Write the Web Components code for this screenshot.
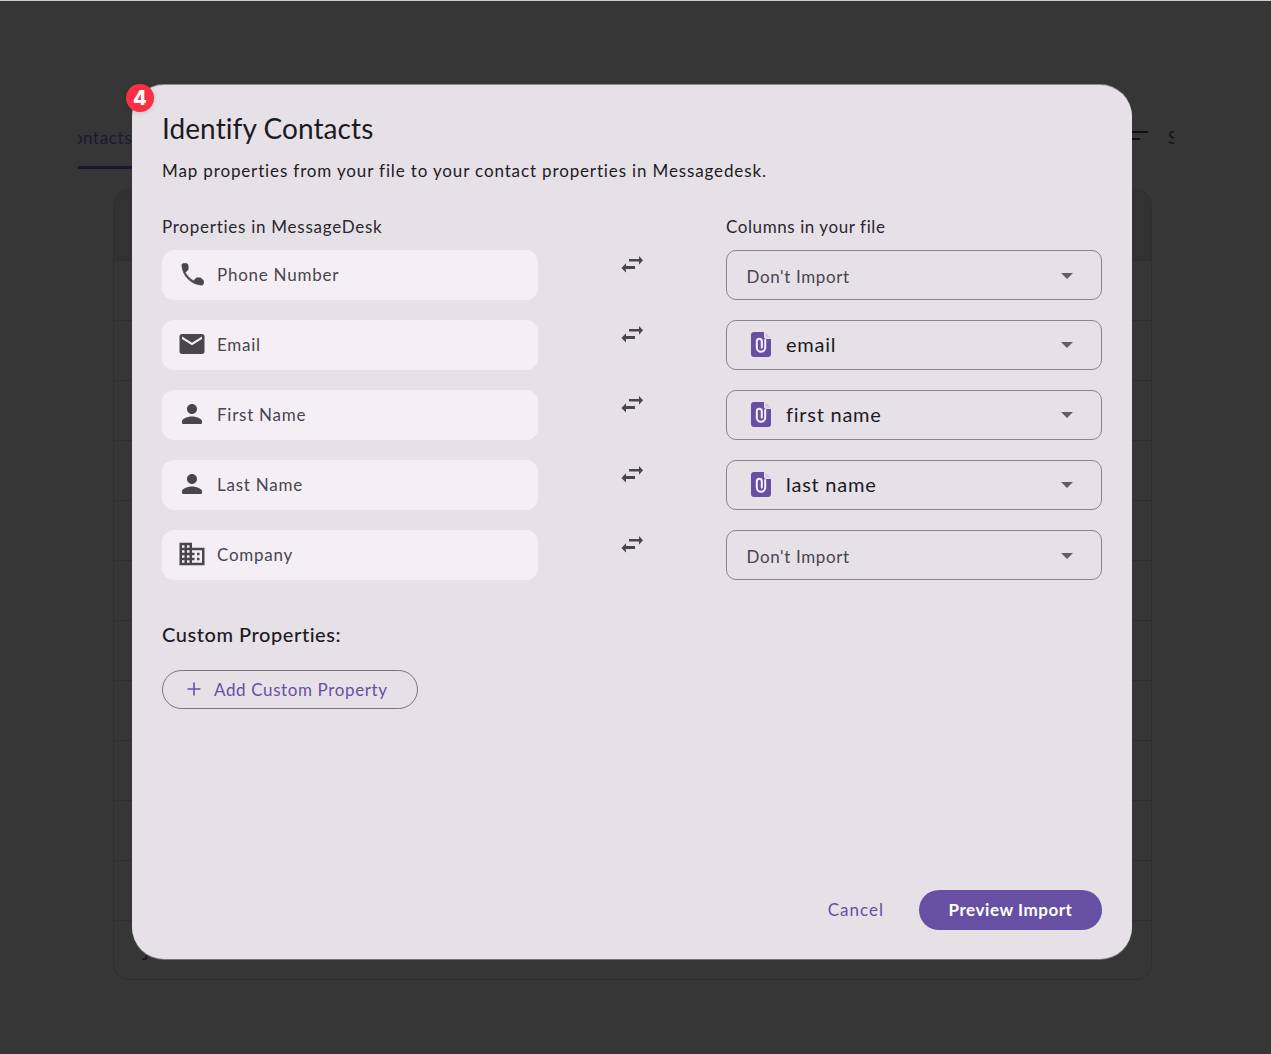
<!DOCTYPE html>
<html><head><meta charset="utf-8">
<style>
html,body{margin:0;padding:0;background:#363636}
body{font-family:"Lato","Open Sans",sans-serif;width:1271px;height:1054px;overflow:hidden;position:relative}
</style></head><body>
<ui-page></ui-page>
<ui-dialog heading="Identify Contacts" description="Map properties from your file to your contact properties in Messagedesk." badge="4">
  <map-row icon="phone" label="Phone Number"></map-row>
  <map-row icon="mail" label="Email" file="email"></map-row>
  <map-row icon="person" label="First Name" file="first name"></map-row>
  <map-row icon="person" label="Last Name" file="last name"></map-row>
  <map-row icon="business" label="Company"></map-row>
</ui-dialog>
<script>
const ICONS={
 phone:'<path stroke="#49454f" stroke-width=".5" d="M19.23 15.26l-2.54-.29c-.61-.07-1.21.14-1.64.57l-1.84 1.84c-2.83-1.44-5.15-3.75-6.59-6.59l1.85-1.85c.43-.43.64-1.03.57-1.64l-.29-2.52c-.08-.68-.65-1.19-1.34-1.19H5.32c-.82 0-1.5.68-1.45 1.5.53 8.5 7.33 15.29 15.82 15.82.82.05 1.5-.63 1.5-1.45v-1.73c.01-.68-.5-1.25-1.18-1.33z"/>',
 mail:'<path d="M20 4H4c-1.1 0-1.99.9-1.99 2L2 18c0 1.1.9 2 2 2h16c1.1 0 2-.9 2-2V6c0-1.1-.9-2-2-2zm0 4l-8 5-8-5V6l8 5 8-5v2z"/>',
 person:'<path d="M12 12c2.21 0 4-1.79 4-4s-1.79-4-4-4-4 1.79-4 4 1.79 4 4 4zm0 2c-2.67 0-8 1.34-8 4v1c0 .55.45 1 1 1h14c.55 0 1-.45 1-1v-1c0-2.66-5.33-4-8-4z"/>',
 business:'<path d="M12 7V3H2v18h20V7H12zM6 19H4v-2h2v2zm0-4H4v-2h2v2zm0-4H4V9h2v2zm0-4H4V5h2v2zm4 12H8v-2h2v2zm0-4H8v-2h2v2zm0-4H8V9h2v2zm0-4H8V5h2v2zm10 12h-8v-2h2v-2h-2v-2h2v-2h-2V9h8v10zm-2-8h-2v2h2v-2zm0 4h-2v2h2v-2z"/>'
};
function def(name,html,cls){
  const t=document.createElement('template');t.innerHTML=html;
  customElements.define(name,class extends HTMLElement{
    constructor(){super();this.attachShadow({mode:'open'}).appendChild(t.content.cloneNode(true));}
    connectedCallback(){cls&&cls.call(this,this.shadowRoot);}
  });
}
def('ui-page',`<style>
:host{display:block;box-sizing:border-box;width:1271px;height:1054px;padding-top:107px;background:#363636;border-top:1px solid #cfcfcf}
.strip{margin:0 97px 0 78px;height:61px;display:flex;justify-content:space-between;overflow:hidden}
.tab{margin-left:-17px;width:200px;height:61px;box-sizing:border-box;border-bottom:3px solid #1b1533;color:#1d1832;font-size:17px;letter-spacing:.6px;line-height:60px;flex:none}
.tools{display:flex;gap:20px;height:61px;align-items:flex-start}
.sort{width:24px;height:20px;margin-top:23px;display:flex;flex-direction:column;align-items:flex-start;gap:5px}
.sort i{display:block;height:2px;background:#0d0d0d}
.s{font-size:17px;color:#141414;line-height:60px;width:6px;overflow:hidden}
.table{margin:20px 119px 0 113px;height:791px;box-sizing:border-box;border:1px solid #2f2f2f;border-radius:16px;overflow:hidden}
.head{height:70px;background:#323232}
.r{height:60px;box-sizing:border-box;border-top:1px solid #2f2f2f}
.r.last{padding:21px 0 0 28px;color:#111;font-size:16px;line-height:24px}
</style>
<div class="strip"><div class="tab">Contacts</div><div class="tools"><div class="sort"><i style="width:24px"></i><i style="width:16px"></i></div><div class="s">Sort</div></div></div>
<div class="table"><div class="head"></div><div class="r"></div><div class="r"></div><div class="r"></div><div class="r"></div><div class="r"></div><div class="r"></div><div class="r"></div><div class="r"></div><div class="r"></div><div class="r"></div><div class="r"></div><div class="r last">J</div></div>`);

def('ui-dialog',`<style>
:host{position:absolute;left:132px;top:85px;width:1000px;height:874px;box-sizing:border-box;background:#e6e1e7;border-radius:32px;padding:26px 30px 29.5px;display:flex;flex-direction:column;color:#1c1b1f;box-shadow:0 -1px 0 #8f8c90,0 1px 0 #77757a}
.badge{position:absolute;left:-6px;top:-1px;width:28px;height:28px;border-radius:50%;background:#f92f43;color:#fff;font:800 20px/28px "Inter","Liberation Sans",sans-serif;text-align:center;box-shadow:0 1px 4px rgba(0,0,0,.15)}
h2{margin:-1px 0 0;font-weight:400;font-size:28px;line-height:36px;letter-spacing:.08px}
p{margin:13px 0 0;font-size:17px;line-height:24px;letter-spacing:.86px}
.cols{display:grid;grid-template-columns:376px 376px;justify-content:space-between;margin-top:32px;font-size:17px;line-height:24px;letter-spacing:.74px;color:#2a272e}
.cols div+div{letter-spacing:.58px}
.rows{display:flex;flex-direction:column;gap:20.5px;margin-top:11px}
h3{margin:40px 0 0;font-weight:500;font-size:20px;line-height:28px;letter-spacing:.56px}
.add{margin-top:22px;align-self:flex-start;display:flex;align-items:center;box-sizing:border-box;height:39.5px;width:256px;border:1.5px solid #79747e;border-radius:20px;padding:1px 0 0 23px;color:#6750a4;font-size:17px;letter-spacing:.62px}
.add svg{width:16px;height:16px;margin:-1px 12px 0 0}
.foot{margin-top:auto;display:flex;justify-content:flex-end;align-items:center;gap:35px}
.cancel{color:#6750a4;font-size:17px;letter-spacing:1px}
.go{width:183px;height:39.5px;border-radius:20px;background:#6750a4;color:#fff;font-size:17px;font-weight:700;letter-spacing:.55px;display:flex;align-items:center;justify-content:center}
</style>
<div class="badge"></div><h2></h2><p></p>
<div class="cols"><div>Properties in MessageDesk</div><div>Columns in your file</div></div>
<div class="rows"><slot></slot></div>
<h3>Custom Properties:</h3>
<div class="add"><svg viewBox="0 0 16 16"><path d="M8 1.5v13M1.5 8h13" stroke="#6750a4" stroke-width="1.6" fill="none"/></svg>Add Custom Property</div>
<div class="foot"><div class="cancel">Cancel</div><div class="go">Preview Import</div></div>`,function(r){
  r.querySelector('h2').textContent=this.getAttribute('heading');
  r.querySelector('p').textContent=this.getAttribute('description');
  r.querySelector('.badge').textContent=this.getAttribute('badge');
});

def('map-row',`<style>
:host{display:grid;grid-template-columns:376px 188px 376px;height:49.5px}
.prop{background:#f3eff5;border-radius:12px;display:flex;align-items:center;padding:0 0 1px 15px;color:#49454f;font-size:17px;letter-spacing:.75px}
.prop svg{width:30px;height:30px;fill:#49454f;margin-right:10px;flex:none}
.swap{display:flex;justify-content:center;padding-top:6px}
.swap svg{width:24px;height:18px;fill:#49454f}
.sel{box-sizing:border-box;border:1.5px solid #8a858d;border-radius:10px;display:flex;align-items:center;padding:0 28px 0 19.5px}
.val{flex:1;display:flex;align-items:center;gap:15px;font-size:20px;letter-spacing:.75px;color:#1c1b1f;padding-bottom:1px}
.val.none{font-size:17px;color:#49454f;letter-spacing:.62px;padding:3px 0 0}
.val svg{width:20px;height:25px;margin-left:4.5px;flex:none}
.arrow{width:0;height:0;border:6px solid transparent;border-top-color:#625e66;border-bottom:0;margin-top:1px}
.arrow.low{margin-top:3px}
</style>
<div class="prop"><svg viewBox="0 0 24 24"></svg><span class="label"></span></div>
<div class="swap"><svg viewBox="0 0 24 18"><path d="M9 3h10V0l4 4.3-4 4.4V5.6H9zM15 10v3H6v3.5L1.4 12 6 7.3V10z"/></svg></div>
<div class="sel"><div class="val"></div><div class="arrow"></div></div>`,function(r){
  r.querySelector('.prop svg').innerHTML=ICONS[this.getAttribute('icon')];
  r.querySelector('.label').textContent=this.getAttribute('label');
  const v=r.querySelector('.val'),f=this.getAttribute('file');
  if(f){
    v.innerHTML='<svg viewBox="0 0 20 25"><path fill="#6750a4" d="M3 0h10v4.5A2.5 2.5 0 0 0 15.5 7H20v15a3 3 0 0 1-3 3H3a3 3 0 0 1-3-3V3a3 3 0 0 1 3-3z"/><path fill="#cfc7e4" d="M14.5 0.5 19.5 5.5H16a1.5 1.5 0 0 1-1.5-1.5z"/><path fill="none" stroke="#f4f1f8" stroke-width="2" stroke-linecap="round" d="M14.2 8v7.6a4.2 4.2 0 0 1-8.4 0V9.2a2.5 2.5 0 0 1 5 0v6.2"/></svg><span></span>';
    v.querySelector('span').textContent=f;
  }else{v.classList.add('none');v.textContent="Don't Import";r.querySelector('.arrow').classList.add('low');}
});
</script>
</body></html>
